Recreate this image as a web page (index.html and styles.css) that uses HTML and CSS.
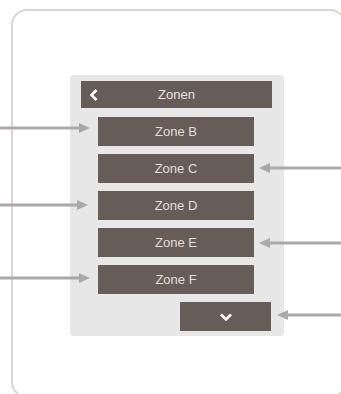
FILE: index.html
```html
<!DOCTYPE html>
<html lang="de">
<head>
    <meta charset="UTF-8">
    <meta name="viewport" content="width=device-width, initial-scale=1.0">
    <title>Zonen</title>
    <link rel="stylesheet" href="styles.css">
</head>
<body>

    <div class="card">
        <div class="panel">
            <div class="header">
                <svg class="back" width="10" height="14" viewBox="0 0 10 14">
                    <polyline points="7.5,2 2.5,7 7.5,12" fill="none" stroke="#fff" stroke-width="2.6"/>
                </svg>
                <span>Zonen</span>
            </div>
            <div class="zone">Zone B</div>
            <div class="zone">Zone C</div>
            <div class="zone">Zone D</div>
            <div class="zone">Zone E</div>
            <div class="zone">Zone F</div>
            <div class="down">
                <svg width="14" height="10" viewBox="0 0 14 10">
                    <polyline points="2,2.5 7,7.5 12,2.5" fill="none" stroke="#fff" stroke-width="2.6"/>
                </svg>
            </div>
        </div>
    </div>

    <!-- Hinweispfeile -->
    <svg class="arrows" width="341" height="394" viewBox="0 0 341 394">
        <g stroke="#a9a9a9" stroke-width="3" fill="#a9a9a9">
            <line x1="0" y1="128" x2="81" y2="128"/>
            <polygon points="79,123 90,128 79,133" stroke="none"/>
            <line x1="0" y1="205" x2="79" y2="205"/>
            <polygon points="77,200 88,205 77,210" stroke="none"/>
            <line x1="0" y1="278" x2="81" y2="278"/>
            <polygon points="79,273 90,278 79,283" stroke="none"/>

            <line x1="341" y1="168" x2="267" y2="168"/>
            <polygon points="270,163 259,168 270,173" stroke="none"/>
            <line x1="341" y1="243" x2="267" y2="243"/>
            <polygon points="270,238 259,243 270,248" stroke="none"/>
            <line x1="341" y1="315" x2="285" y2="315"/>
            <polygon points="288,310 277,315 288,320" stroke="none"/>
        </g>
    </svg>

</body>
</html>
```

FILE: styles.css
```css
body {
    margin: 0;
    font-family: "Liberation Sans", Arial, sans-serif;
    background: white;
    width: 341px;
    height: 394px;
    overflow: hidden;
    position: relative;
}
.card {
    margin: 9px 0 0 11px;
    width: 335px;
    height: 389px;
    border: 2px solid #ddd3d0;
    border-radius: 16px;
    padding: 64px 0 0 57px;
    box-sizing: border-box;
}
.panel {
    width: 214px;
    background: #e8e7e8;
    border-radius: 4px;
    padding: 6px 12px 5px 11px;
    box-sizing: border-box;
    display: flex;
    flex-direction: column;
    gap: 8px;
}
.header {
    height: 27px;
    background: #665d58;
    color: #e6e2de;
    font-size: 13px;
    display: flex;
    align-items: center;
    justify-content: center;
    position: relative;
    margin-bottom: 1px;
}
.header .back {
    position: absolute;
    left: 8px;
    top: 7px;
}
.zone {
    margin-left: 17px;
    width: 156px;
    height: 29px;
    background: #665d58;
    color: #e2deda;
    font-size: 13px;
    display: flex;
    align-items: center;
    justify-content: center;
}
.down {
    align-self: flex-end;
    margin-right: 1px;
    width: 91px;
    height: 29px;
    background: #665d58;
    display: flex;
    align-items: center;
    justify-content: center;
}
.arrows {
    position: absolute;
    top: 0;
    left: 0;
    pointer-events: none;
}
```
